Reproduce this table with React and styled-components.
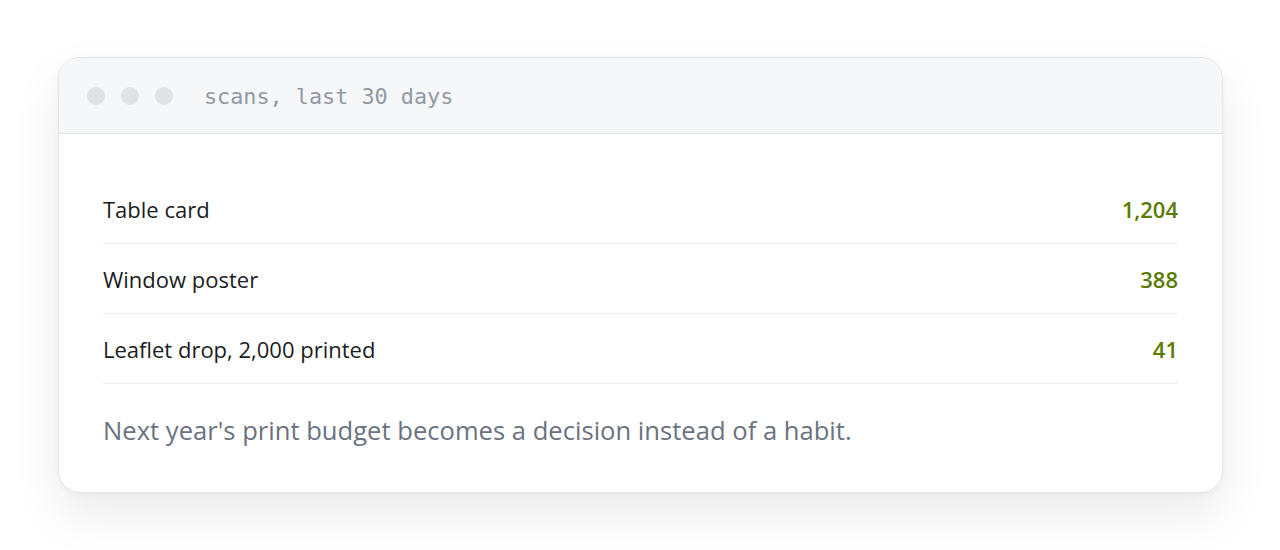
import React from "react";
import styled, { createGlobalStyle } from "styled-components";

const Global = createGlobalStyle`
  html, body { margin: 0; padding: 0; background: #ffffff; }
  body { font-family: "Open Sans", "Noto Sans", sans-serif; }
`;

const Page = styled.div`
  padding: 57px 57px 0 58px;
  box-sizing: border-box;
  width: 1280px;
  height: 550px;
`;

const Card = styled.div`
  background: #ffffff;
  border: 1px solid #e3e5e8;
  border-radius: 22px;
  overflow: hidden;
  box-shadow: 0 22px 50px rgba(0, 0, 0, 0.08), 0 2px 6px rgba(0, 0, 0, 0.03);
`;

const TitleBar = styled.div`
  display: flex;
  align-items: center;
  height: 76px;
  padding: 1px 28px 0 28px;
  box-sizing: border-box;
  background: #f6f7f8;
  border-bottom: 1px solid #e3e5e8;
`;

const Dots = styled.div`
  display: flex;
  gap: 16px;
  margin-right: 31px;
`;

const Dot = styled.span`
  width: 18px;
  height: 18px;
  border-radius: 50%;
  background: #dfe2e6;
`;

const Title = styled.span`
  font-family: "DejaVu Sans Mono", "Liberation Mono", monospace;
  font-size: 21.8px;
  color: #9199a3;
`;

const Body = styled.div`
  padding: 40px 44px 44px 44px;
`;

const Row = styled.div`
  display: flex;
  justify-content: space-between;
  align-items: center;
  height: 69px;
  border-bottom: 1px solid #eceef0;
`;

const Label = styled.span`
  font-size: 22px;
  color: #1a1d21;
`;

const Value = styled.span`
  font-size: 22px;
  font-weight: 600;
  color: #5b7a00;
`;

const Note = styled.p`
  margin: 30px 0 0 0;
  font-size: 25.6px;
  line-height: 34px;
  color: #6b7280;
`;

const rows = [
  ["Table card", "1,204"],
  ["Window poster", "388"],
  ["Leaflet drop, 2,000 printed", "41"],
];

export default function App() {
  return (
    <>
      <Global />
      <Page>
        <Card>
          <TitleBar>
            <Dots>
              <Dot />
              <Dot />
              <Dot />
            </Dots>
            <Title>scans, last 30 days</Title>
          </TitleBar>
          <Body>
            {rows.map(([l, v]) => (
              <Row key={l}>
                <Label>{l}</Label>
                <Value>{v}</Value>
              </Row>
            ))}
            <Note>Next year's print budget becomes a decision instead of a habit.</Note>
          </Body>
        </Card>
      </Page>
    </>
  );
}
